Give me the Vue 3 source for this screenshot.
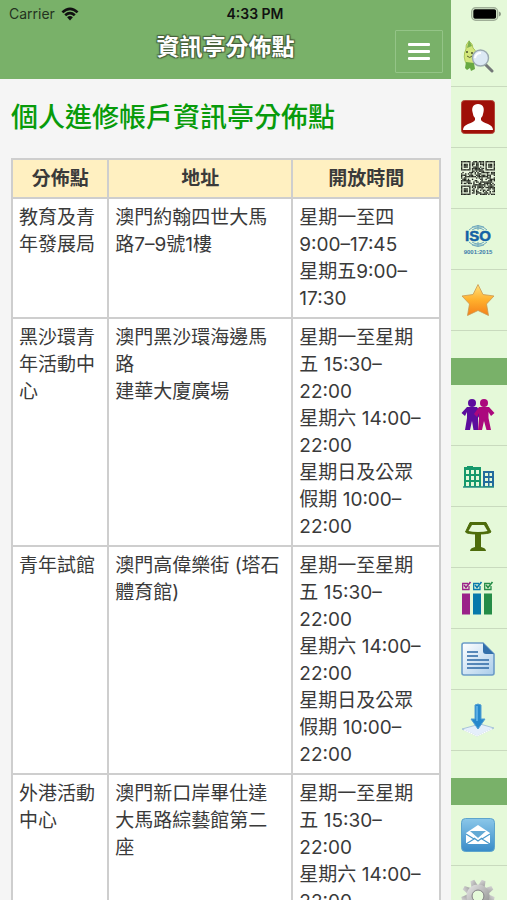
<template>
  <div class="app" lang="zh-Hant">
    <div class="status">
      <div class="carrier">
        <span>Carrier</span>
        <svg width="18" height="14" viewBox="0 0 18 14">
          <path d="M0.5 4.4Q9-3.2 17.5 4.4L15.7 6.3Q9 0.4 2.3 6.3Z" />
          <path d="M3.3 7.3Q9 2.4 14.7 7.3L12.9 9.2Q9 6 5.1 9.2Z" />
          <path d="M6.1 10.3Q9 7.9 11.9 10.3L9 13.4Z" />
        </svg>
      </div>
      <span class="time">4:33 PM</span>
      <svg class="battery" width="30" height="14" viewBox="0 0 30 14">
        <rect x="0.7" y="0.7" width="26" height="12.6" rx="4" fill="none" stroke="#9fae97" stroke-width="1.4" />
        <rect x="2.3" y="2.3" width="22.8" height="9.4" rx="1.8" />
        <path d="M28 4.6Q30 5.2 30 7T28 9.4Z" fill="#8d9a86" />
      </svg>
    </div>

    <div class="page">
      <header class="navbar">
        <h1>資訊亭分佈點</h1>
        <button type="button" class="menu" aria-label="選單">
          <i></i>
          <i></i>
          <i></i>
        </button>
      </header>
      <main class="content">
        <h2>個人進修帳戶資訊亭分佈點</h2>
        <table>
          <thead>
            <tr>
              <th class="col-name">分佈點</th>
              <th class="col-address">地址</th>
              <th class="col-hours">開放時間</th>
            </tr>
          </thead>
          <tbody>
            <tr v-for="place in places" :key="place.name">
              <td>{{ place.name }}</td>
              <td><div v-for="line in place.address" :key="line">{{ line }}</div></td>
              <td><div v-for="line in place.hours" :key="line">{{ line }}</div></td>
            </tr>
          </tbody>
        </table>
      </main>
    </div>

    <nav class="sidebar">
      <div class="group">
        <a href="#" aria-label="搜尋">
          <svg viewBox="0 0 34 34">
            <path d="M8 2Q12 5 12 9Q17 13 14 20L12 26H6Q1 18 5 10Q4 6 8 2Z" fill="#d3e67c" stroke="#a9c65a" />
            <path d="M8 1L11 7L6 9Z" fill="#7db04f" />
            <path d="M5 23L13 24L14 30L10 32L9 29L6 31L4 29Z" fill="#67a942" />
            <path d="M5 13h2M10 14h2" stroke="#4a522b" stroke-width="1.3" />
            <path d="M6 17Q9 20 11 17" fill="none" stroke="#58622e" />
            <path d="M24 25L31 32" stroke="#737778" stroke-width="3" stroke-linecap="round" />
            <circle cx="19.5" cy="19" r="8" fill="#dce9f4" stroke="#9aa9af" stroke-width="1.4" />
            <path d="M14 19Q15 14 20 14" fill="none" stroke="#fff" stroke-width="2" />
          </svg>
        </a>
        <a href="#" aria-label="個人帳戶">
          <svg viewBox="0 0 34 34">
            <rect x="0.5" y="0.5" width="33" height="33" rx="3" fill="#9f1008" stroke="#b3483a" />
            <path d="M17 4C22 4 23.500 8 22.500 12Q22 16 20 18V20Q21 22 27 24Q32 26 32 30H2Q2 26 7 24Q13 22 14 20V18Q12 16 11.500 12C10.500 8 12 4 17 4Z" fill="#fff" />
          </svg>
        </a>
        <a href="#" aria-label="二維碼">
          <svg viewBox="0 0 25 25">
            <rect width="25" height="25" fill="#eaf6df" />
            <rect v-for="m in modules" :key="m.x + '-' + m.y" :x="m.x" :y="m.y" width="1" height="1" fill="#20251d" />
          </svg>
        </a>
        <a href="#" aria-label="ISO 9001:2015">
          <svg viewBox="0 0 34 34">
            <g fill="none" stroke="#6da6bd">
              <path d="M8 8Q17-1 26 8M11 8Q17 4 23 8M17 3V8M8 20Q17 29 26 20M11 20Q17 24 23 20M17 20V24" />
              <path d="M11 5H23M11 23H23" />
            </g>
            <text x="17" y="19" text-anchor="middle" class="iso">ISO</text>
            <text x="17" y="32" text-anchor="middle" class="iso-no">9001:2015</text>
          </svg>
        </a>
        <a href="#" aria-label="最愛">
          <svg viewBox="0 0 34 34">
            <defs>
              <linearGradient id="star" x2="0" y2="1">
                <stop offset="0" stop-color="#ffe07b" />
                <stop offset="0.5" stop-color="#ffb02c" />
                <stop offset="1" stop-color="#f4801a" />
              </linearGradient>
            </defs>
            <path d="M17 1.500L22 11.500L33 13L25.500 21L27.500 32.500L17 27.500L6.500 32.500L8.500 21L1 13L12 11.500Z" fill="url(#star)" stroke="#ca984f" stroke-width="0.8" stroke-linejoin="round" />
          </svg>
        </a>
      </div>
      <div class="band"></div>
      <div class="group">
        <a href="#" aria-label="青年">
          <svg viewBox="0 0 34 34">
            <g fill="#5c0d9d">
              <circle cx="11" cy="5" r="4" />
              <path d="M6 9H16L20 15L17 20V32H12.500L11 23L9 32H4L6 20V14L4 18L0.500 15Z" />
            </g>
            <g fill="#ab087d">
              <circle cx="23" cy="5" r="4" />
              <path d="M18 9H28L33.500 15L30 18L27.500 14V20L30 32H25.500L23 23L21 32H17L18 20V15L16 19L13 16Z" />
            </g>
          </svg>
        </a>
        <a href="#" aria-label="機構">
          <svg viewBox="0 0 34 34">
            <path d="M3 10V8H6V7H12V8H20V28H3Z" fill="#16996b" />
            <path d="M22 13V12H33V28H22Z" fill="#226b9d" />
            <path d="M2 28H33" stroke="#279083" stroke-width="1.500" />
            <g fill="#e5f9d9">
              <path d="M5 11h3v4h-3zM10 11h3v4h-3zM15 11h3v4h-3zM5 17h3v4h-3zM10 17h3v4h-3zM15 17h3v4h-3zM5 23h3v4h-3zM10 23h3v4h-3zM15 23h3v4h-3z" />
              <path d="M24 14h3v3h-3zM28.500 14h2.500v3h-2.500zM24 19h3v3h-3zM28.500 19h2.500v3h-2.500zM24 24h3v3h-3zM28.500 24h2.500v3h-2.500z" />
            </g>
          </svg>
        </a>
        <a href="#" aria-label="講台">
          <svg viewBox="0 0 34 34">
            <path d="M9 2.500H25L30 12Q28 14 17 14T4.500 12Z" fill="#4d6c0b" stroke="#4d6c0b" stroke-linejoin="round" />
            <path d="M11 5H23L26.500 11Q23 12 17 12T7.500 11Z" fill="#e5f9d9" />
            <path d="M14 14H20V27Q25 28 25 31H9Q9 28 14 27Z" fill="#4d6c0b" />
          </svg>
        </a>
        <a href="#" aria-label="問卷">
          <svg viewBox="0 0 34 34">
            <g v-for="(color, i) in ['#9a2289', '#0879ab', '#258c47']" :key="color" :transform="`translate(${1 + i * 11} 0)`" fill="none" :stroke="color">
              <path d="M7 5V8.500H0.700V2.500H6" stroke-width="1.300" />
              <path d="M2 4L4 6.500L8.500 1" stroke-width="1.700" />
              <rect x="0.500" y="13" width="7" height="20" :fill="color" />
            </g>
          </svg>
        </a>
        <a href="#" aria-label="文件">
          <svg viewBox="0 0 34 34">
            <defs>
              <linearGradient id="paper" x2="1" y2="1">
                <stop offset="0" stop-color="#fff" />
                <stop offset="1" stop-color="#a9ccea" />
              </linearGradient>
            </defs>
            <path d="M3 1H22L33 12V31Q33 33 31 33H3Q1 33 1 31V3Q1 1 3 1Z" fill="url(#paper)" stroke="#6c9cc8" stroke-width="1.600" />
            <path d="M22 1L33 12H25Q22 12 22 9Z" fill="#326fab" />
            <path d="M6 10H17M6 14H17M6 18H28M6 22H28M6 26H28" stroke="#2b67a4" stroke-width="1.700" />
          </svg>
        </a>
        <a href="#" aria-label="下載">
          <svg viewBox="0 0 34 34">
            <path d="M1 26L19 21L33 25L16 33Z" fill="#e5effb" stroke="#a8c4da" />
            <path d="M3 27L16 33L31 26" fill="none" stroke="#fff" />
            <path d="M14 2Q17 0 20 2V16H24L17 26L10 16H14Z" fill="#2688cc" stroke="#539fd3" />
            <path d="M16 3V18" stroke="#67b9ec" stroke-width="1.500" />
          </svg>
        </a>
      </div>
      <div class="band"></div>
      <div class="group">
        <a href="#" aria-label="聯絡我們">
          <svg viewBox="0 0 34 34">
            <defs>
              <linearGradient id="mail" x2="0" y2="1">
                <stop offset="0" stop-color="#8bc7e9" />
                <stop offset="1" stop-color="#388bc8" />
              </linearGradient>
            </defs>
            <rect x="0.500" y="0.500" width="33" height="33" rx="4" fill="url(#mail)" stroke="#5da4cc" />
            <path d="M5 15L17 7L29 15V26H5Z" fill="#fff" />
            <path d="M9 13H25L17 20Z" fill="#63a9d4" />
            <path d="M5 16L13 21L5 26M29 16L21 21L29 26M13 20L17 23L21 20" fill="none" stroke="#4898ca" stroke-width="1.200" />
          </svg>
        </a>
        <a href="#" aria-label="設定">
          <svg viewBox="0 0 34 34">
            <defs>
              <linearGradient id="gear" x2="1" y2="1">
                <stop offset="0" stop-color="#dcdcdc" />
                <stop offset="1" stop-color="#989898" />
              </linearGradient>
            </defs>
            <g fill="url(#gear)">
              <path v-for="n in 9" :key="n" d="M13.500 8L15 0.500H19L20.500 8Z" :transform="`rotate(${n * 40 - 20} 17 17)`" />
            </g>
            <circle cx="17" cy="17" r="8.500" fill="none" stroke="url(#gear)" stroke-width="6" />
            <circle cx="17" cy="17" r="6" fill="none" stroke="#888" />
          </svg>
        </a>
      </div>
    </nav>
  </div>
</template>

<script setup>
import { ref } from 'vue';

const centreHours = [
  '星期一至星期五 15:30–22:00',
  '星期六 14:00–22:00',
  '星期日及公眾假期 10:00–22:00',
];

const places = ref([
  {
    name: '教育及青年發展局',
    address: ['澳門約翰四世大馬路7–9號1樓'],
    hours: ['星期一至四 9:00–17:45', '星期五9:00–17:30'],
  },
  {
    name: '黑沙環青年活動中心',
    address: ['澳門黑沙環海邊馬路', '建華大廈廣場'],
    hours: centreHours,
  },
  {
    name: '青年試館',
    address: ['澳門高偉樂街 (塔石體育館)'],
    hours: centreHours,
  },
  {
    name: '外港活動中心',
    address: ['澳門新口岸畢仕達大馬路綜藝館第二座'],
    hours: centreHours,
  },
]);

// QR icon: three finder squares, the rest is filler
const finder = (x, y) => {
  const edge = x === 0 || x === 6 || y === 0 || y === 6;
  const core = x > 1 && x < 5 && y > 1 && y < 5;
  return edge || core;
};

const isDark = (x, y) => {
  if (x < 8 && y < 8) return x < 7 && y < 7 && finder(x, y);
  if (x > 16 && y < 8) return x > 17 && y < 7 && finder(x - 18, y);
  if (x < 8 && y > 16) return x < 7 && y > 17 && finder(x, y - 18);
  const n = Math.sin(x * 12.9898 + y * 78.233) * 43758.5453;
  return n - Math.floor(n) > 0.42;
};

const modules = [];
for (let y = 0; y < 25; y++) {
  for (let x = 0; x < 25; x++) {
    if (isDark(x, y)) modules.push({ x, y });
  }
}
</script>

<style>
body {
  margin: 0;
}
</style>

<style scoped>
.app {
  display: flex;
  position: relative;
  height: 100vh;
  overflow: hidden;
  background: #f5f5f5;
  color: #3a3a3a;
  font-family: Inter, "Noto Sans CJK TC", sans-serif;
}

.status {
  position: absolute;
  top: 0;
  left: 0;
  right: 0;
  z-index: 1;
  display: grid;
  grid-template-columns: 1fr auto 1fr;
  align-items: center;
  height: 27px;
  padding: 0 6px 0 9px;
  font-size: 14px;
  color: #111;
  pointer-events: none;
}

.carrier {
  display: flex;
  align-items: center;
  gap: 6px;
  color: #24331f;
}

.carrier svg {
  fill: #111;
}

.time {
  font-weight: 600;
}

.battery {
  justify-self: end;
}

.page {
  flex: 1;
  min-width: 0;
  overflow-y: auto;
  scrollbar-width: none;
}

.navbar {
  display: grid;
  grid-template-columns: 1fr auto 1fr;
  padding: 28px 8px 6px;
  background: #79b169;
}

h1 {
  grid-column: 2;
  margin: 0;
  font-size: 23px;
  line-height: 38px;
  font-weight: 700;
  color: #fff;
  text-shadow: 1px 1px 1px #47613c, -1px -1px 1px #47613c, 1px -1px 1px #47613c, -1px 1px 1px #47613c;
}

.menu {
  justify-self: end;
  display: flex;
  flex-direction: column;
  align-items: center;
  justify-content: center;
  gap: 4px;
  width: 48px;
  height: 43px;
  margin-top: 2px;
  padding: 0;
  border: 1px solid #94c487;
  border-radius: 1px;
  background: transparent;
}

.menu i {
  width: 22px;
  height: 3px;
  border-radius: 1px;
  background: #fff;
}

.content {
  padding: 19px 10px 19px 11px;
}

h2 {
  margin: 0 0 20px;
  font-size: 27px;
  line-height: 40px;
  font-weight: 500;
  color: #089b0b;
}

table {
  width: 100%;
  table-layout: fixed;
  border-collapse: collapse;
  background: #fff;
  font-size: 19px;
  line-height: 27px;
}

th,
td {
  box-sizing: border-box;
  border: 2px solid #cecece;
  padding: 5px 11px 5px 6px;
  text-align: left;
  vertical-align: top;
}

th {
  padding: 5px;
  background: #fff0c1;
  text-align: center;
  font-weight: 700;
}

.col-name {
  width: 22.5%;
}

.col-address {
  width: 43%;
}

.sidebar {
  flex: none;
  width: 56px;
  padding-top: 26px;
  box-sizing: border-box;
  background: #e5f9d9;
}

.group {
  padding-bottom: 27px;
}

.group a {
  display: flex;
  align-items: center;
  justify-content: center;
  height: 60px;
  padding-right: 2px;
  border-bottom: 1px solid #c9dabe;
}

.group svg {
  width: 34px;
  height: 34px;
}

.band {
  height: 27px;
  background: #79b169;
}

.iso {
  font: 700 15px "Liberation Sans", sans-serif;
  fill: #1462a5;
  stroke: #1462a5;
  stroke-width: 0.5px;
}

.iso-no {
  font: 700 6px "Liberation Sans", sans-serif;
  fill: #3a7bab;
}
</style>
